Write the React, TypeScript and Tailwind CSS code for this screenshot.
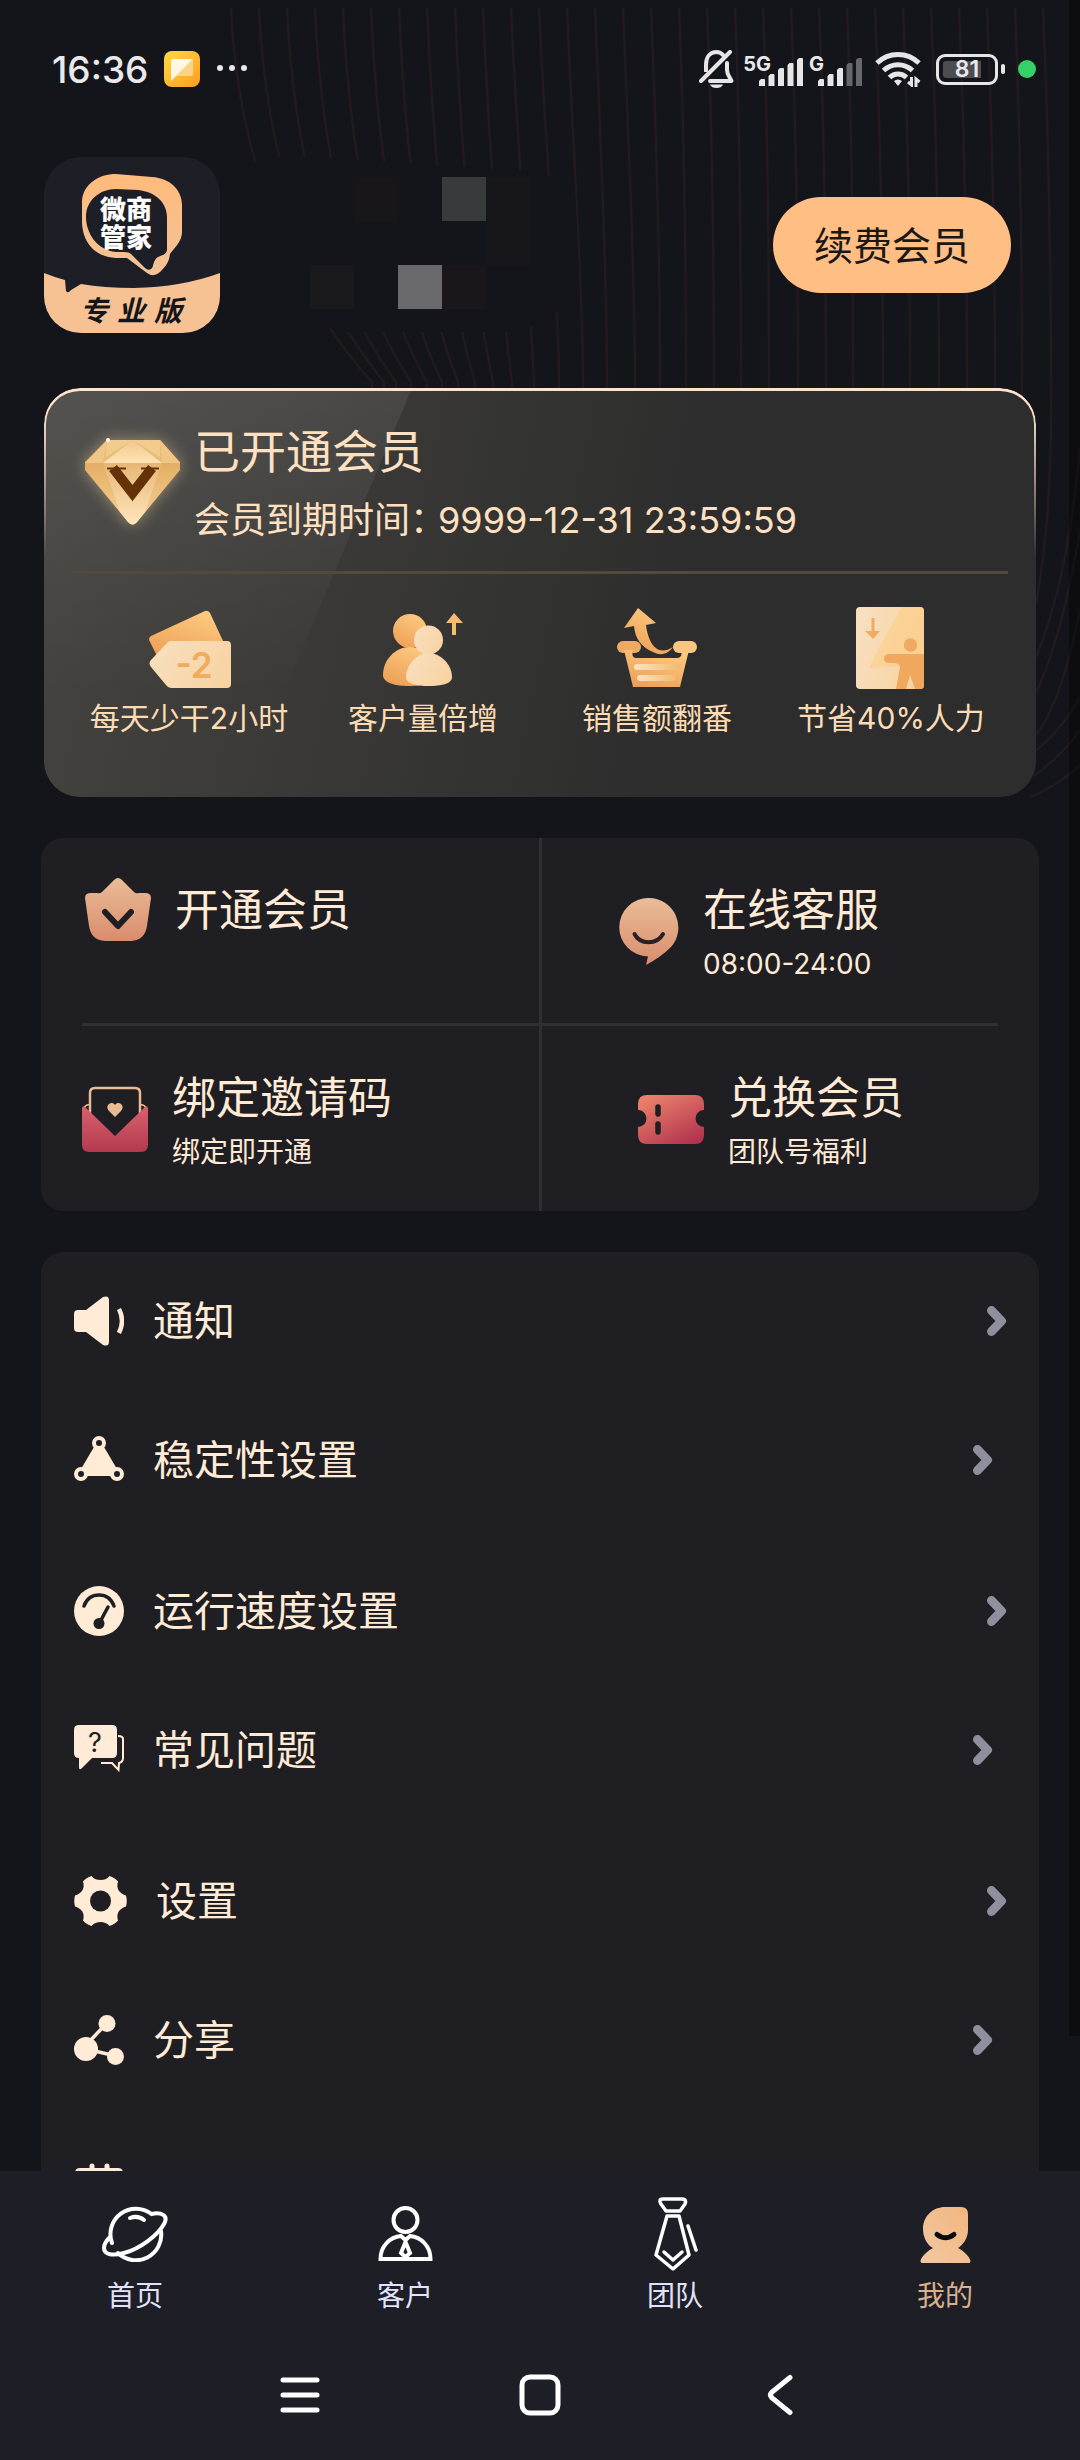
import type { ReactNode } from "react";

const CREAM = "#ffebd6";

/* x positions of the decorative lines where they reach the membership card */
const LINE_ENDS = [
  372, 384, 396, 411, 427, 442, 458, 475, 493, 512, 534, 559, 583, 607, 635, 660, 686, 714, 741,
  769, 798, 826, 853, 883, 910, 939, 967, 995, 1022, 1051,
];

function BackgroundLines() {
  return (
    <svg
      className="pointer-events-none absolute top-0 right-0"
      width="1080"
      height="800"
      viewBox="0 0 1080 800"
      fill="none"
      aria-hidden="true"
    >
      <g stroke="#211b20" strokeWidth="2.5">
        {LINE_ENDS.map((end, i) => {
          const top = 231 + i * 28;
          const pull = Math.max(0, 84 - i * 8);
          return (
            <path key={end} d={`M${top} 8C${top + 6} 150 ${end - pull} 290 ${end} 382V400`} />
          );
        })}
        <path d="M1051 380C1052 460 1048 540 1036 603" />
        <path d="M1080 447C1074 520 1060 600 1036 657" />
        <path d="M1080 530C1070 590 1056 650 1036 693" />
        <path d="M1080 610C1070 660 1056 710 1036 735" />
        <path d="M1080 697C1066 722 1052 738 1034 752" />
        <path d="M1080 730C1066 750 1050 764 1034 776" />
        <path d="M1080 765C1064 780 1048 790 1030 797" />
      </g>
      <path
        d="M225 182L262 158L300 156L540 172L575 190L580 300L520 332L340 332L225 290Z"
        fill="#14151a"
      />
    </svg>
  );
}

function SignalBars({ active }: { active: number }) {
  const heights = [7, 12, 18, 23, 28];
  return (
    <svg width="44" height="29" viewBox="0 0 44 29" aria-hidden="true">
      {heights.map((h, i) => (
        <path
          key={h}
          d={`M${i * 9.5} 29V${31 - h}l2 -2h3q1 0 1 1V29Z`}
          fill={i < active ? "#e6e6e8" : "#66666c"}
        />
      ))}
    </svg>
  );
}

function StatusBar() {
  return (
    <div className="flex h-[138px] shrink-0 items-center justify-between pr-11 pl-[52px] text-[#e9e9eb]">
      <div className="flex items-center">
        <span className="text-[37px] leading-none font-medium">16:36</span>
        <svg className="ml-[16px]" width="36" height="36" viewBox="0 0 36 36" aria-hidden="true">
          <defs>
            <linearGradient id="app" x1="0" y1="0" x2="1" y2="1">
              <stop offset="0" stopColor="#ffdc3c" />
              <stop offset="1" stopColor="#ff9a28" />
            </linearGradient>
          </defs>
          <rect width="36" height="36" rx="8" fill="url(#app)" />
          <path d="M12 25L29 8V23Q29 25 27 25Z" fill="#ffd28a" />
          <path d="M7 30V10Q7 8 9 8H29Z" fill="#fff7e6" />
        </svg>
        <svg className="ml-4" width="32" height="8" viewBox="0 0 32 8" fill="#e9e9eb" aria-hidden="true">
          <circle cx="4" cy="3" r="3" />
          <circle cx="16" cy="3" r="3" />
          <circle cx="28" cy="3" r="3" />
        </svg>
      </div>
      <div className="flex items-center">
        <svg width="36" height="38" viewBox="0 0 36 38" fill="none" stroke="#e6e6e8" strokeWidth="4" aria-hidden="true">
          <path d="M2 31L31 2" strokeLinecap="round" />
          <path d="M7 22V15C7 7 11 2 17.5 2C21 2 23 3.500 25 6" />
          <path d="M28 13V20C28 25 31 27 32.500 31H11" strokeLinecap="round" strokeLinejoin="round" />
          <path d="M11 34.500H24C23 37 20.500 38 17.500 38C14.500 38 12 37 11 34.500Z" fill="#e6e6e8" stroke="none" />
        </svg>
        <div className="ml-2 flex items-start">
          <span className="text-[20px] leading-[22px] font-bold">5G</span>
          <span className="-ml-3 pt-[4px]"><SignalBars active={5} /></span>
        </div>
        <div className="ml-[6px] flex items-start">
          <span className="text-[20px] leading-[22px] font-bold">G</span>
          <span className="-ml-[6px] pt-[4px]"><SignalBars active={3} /></span>
        </div>
        <svg className="ml-[13px]" width="46" height="36" viewBox="0 0 46 36" fill="none" stroke="#e6e6e8" strokeWidth="5" aria-hidden="true">
          <path d="M2 12A30 30 0 0 1 44 12" />
          <path d="M8.500 19.500A21 21 0 0 1 37.500 19.500" />
          <path d="M14.500 26.500A12 12 0 0 1 31.500 26.500" />
          <path d="M19 30A6 6 0 0 1 27 30L23 35Z" fill="#e6e6e8" stroke="none" />
          <path d="M36.500 26V34L33 31M41 36V28L44.500 31" strokeWidth="3" />
        </svg>
        <div className="ml-[15px] flex items-center">
          <div className="flex h-[31px] w-[62px] items-center rounded-[9px] border-[3px] border-[#e6e6e8] p-1">
            <div className="relative h-full w-full">
              <div className="h-full w-4/5 rounded-l-[3px] bg-[#4c4c51]" />
              <span className="absolute inset-0 flex items-center justify-center text-[23px] leading-none font-semibold">
                81
              </span>
            </div>
          </div>
          <div className="ml-[3px] h-[10px] w-[4px] rounded-full bg-[#e6e6e8]" />
        </div>
        <div className="ml-[13px] h-[18px] w-[18px] rounded-full bg-[#35d167]" />
      </div>
    </div>
  );
}

function Logo() {
  return (
    <svg width="176" height="176" viewBox="0 0 176 176" role="img" aria-label="微商管家专业版">
      <defs>
        <clipPath id="logoClip">
          <rect width="176" height="176" rx="37" />
        </clipPath>
        <linearGradient id="bubble" x1="0" y1="0" x2="0" y2="1">
          <stop offset="0" stopColor="#ffba7c" />
          <stop offset="1" stopColor="#f3c399" />
        </linearGradient>
      </defs>
      <g clipPath="url(#logoClip)">
        <rect width="176" height="176" fill="#1e1e27" />
        <path d="M0 116Q10 120 21 123L22 134Q24 137 27 133L37 127Q60 131 90 131Q138 130 176 116V176H0Z" fill="#f6c193" />
      </g>
      <path
        d="M72 17L108 20C126 21 138 33 138 48V75C138 85 130 91 126 97C125 106 121 110 116 115Q110 121 103 116L83 101H72C50 100 38 84 38 64V44C39 27 55 17 72 17Z"
        fill="url(#bubble)"
      />
      <path
        d="M72 32L94 33C112 35 123 46 123 60V93C122 98 118 98 114 100C108 104 110 111 107 112Q104 114 101 111L87 97Q85 95 80 95H72C52 93 42 75 42 60C42 43 56 32 72 32Z"
        fill="#1e1e27"
      />
      <g fontWeight="800" fontSize="26" fill="#ffffff">
        <text x="56" y="62">微商</text>
        <text x="56" y="90">管家</text>
      </g>
      <g fontWeight="600" fontSize="28" fontStyle="italic" fill="#14151a" textAnchor="middle">
        <text x="50" y="164">专</text>
        <text x="87" y="164">业</text>
        <text x="124" y="164">版</text>
      </g>
    </svg>
  );
}

const MOSAIC = [
  "", "bg-[#18161b]", "", "bg-[#393a3c]", "bg-[#17161a]",
  "", "", "", "", "bg-[#17161a]",
  "bg-[#19191b]", "", "bg-[#69696d]", "bg-[#1a171c]", "",
];

function Profile() {
  return (
    <div className="mt-[19px] flex shrink-0 items-center justify-between pr-[69px] pl-11">
      <Logo />
      <div className="mr-auto mb-1 ml-[90px] grid grid-cols-[repeat(5,44px)] auto-rows-[44px]" aria-hidden="true">
        {MOSAIC.map((tone, i) => (
          <div key={i} className={tone} />
        ))}
      </div>
      <button
        type="button"
        className="h-24 rounded-full bg-[#ffbe83] px-[41px] text-[39px] leading-none text-[#1b1714]"
      >
        续费会员
      </button>
    </div>
  );
}

function Diamond() {
  return (
    <svg
      className="shrink-0 overflow-visible drop-shadow-[0_0_8px_rgba(255,225,170,0.45)]"
      width="95"
      height="86"
      viewBox="0 0 95 86"
      aria-hidden="true"
    >
      <defs>
        <linearGradient id="dSide" x1="0" y1="0" x2="0" y2="1">
          <stop offset="0" stopColor="#dca050" />
          <stop offset="1" stopColor="#f6d397" />
        </linearGradient>
        <linearGradient id="dMid" x1="0" y1="0" x2="0" y2="1">
          <stop offset="0" stopColor="#e7b676" />
          <stop offset="1" stopColor="#ffe6bd" />
        </linearGradient>
        <linearGradient id="dTop" x1="0" y1="0" x2="0" y2="1">
          <stop offset="0" stopColor="#f0c98c" />
          <stop offset="1" stopColor="#ffe2b4" />
        </linearGradient>
      </defs>
      <path d="M22 1H75L95 23V31L52 83Q47.500 88 43 83L0 31V23Z" fill="url(#dSide)" />
      <path d="M18 24H77L60 73L52 83Q47.500 88 43 83L35 73Z" fill="url(#dMid)" />
      <path d="M22 1H75L95 24H0Z" fill="#e9bb78" />
      <path d="M22 1L18 24H0ZM75 1L77 24H95Z" fill="#f0c585" />
      <path d="M47.500 1L77 24H18Z" fill="url(#dTop)" />
      <path d="M22 1H47.500L21 18ZM75 1H47.500L75 18Z" fill="#f2cc8f" />
      <path d="M28 29L47.500 54L67 29" fill="none" stroke="#643108" strokeWidth="10" />
      <path d="M22 29.500H41M56 29.500H74" stroke="#643108" strokeWidth="2" />
      <circle cx="23" cy="1" r="2" fill="#fffaf0" />
    </svg>
  );
}

function Gradients() {
  return (
    <svg width="0" height="0" className="absolute" aria-hidden="true">
      <defs>
        <linearGradient id="gold" x1="0.7" y1="0" x2="0.2" y2="1">
          <stop offset="0" stopColor="#fdc980" />
          <stop offset="1" stopColor="#ec9f55" />
        </linearGradient>
        <linearGradient id="pale" x1="0" y1="0.3" x2="1" y2="0.7">
          <stop offset="0" stopColor="#f8dfbe" />
          <stop offset="1" stopColor="#f8d3a2" />
        </linearGradient>
        <linearGradient id="fade" x1="0" y1="0" x2="1" y2="0">
          <stop offset="0" stopColor="#fbe3c2" />
          <stop offset="1" stopColor="#f4b96f" />
        </linearGradient>
        <linearGradient id="peach" x1="0" y1="0" x2="0" y2="1">
          <stop offset="0" stopColor="#e9bd97" />
          <stop offset="1" stopColor="#da8c6d" />
        </linearGradient>
        <linearGradient id="rose" x1="0" y1="0" x2="0" y2="1">
          <stop offset="0" stopColor="#d9626c" />
          <stop offset="1" stopColor="#b4394f" />
        </linearGradient>
        <linearGradient id="coral" x1="0.1" y1="0" x2="0.8" y2="1">
          <stop offset="0" stopColor="#ee856c" />
          <stop offset="1" stopColor="#b2344f" />
        </linearGradient>
        <linearGradient id="skin" x1="1" y1="0" x2="0" y2="1">
          <stop offset="0" stopColor="#f2b67d" />
          <stop offset="1" stopColor="#f1c8a3" />
        </linearGradient>
      </defs>
    </svg>
  );
}

function Art({ w = 84, h = 84, children }: { w?: number; h?: number; children: ReactNode }) {
  return (
    <svg className="shrink-0" width={w} height={h} viewBox={`0 0 ${w} ${h}`} fill="none" aria-hidden="true">
      {children}
    </svg>
  );
}

const benefits: { label: string; icon: ReactNode }[] = [
  {
    label: "每天少干2小时",
    icon: (
      <Art>
        <path d="M4 30L58 5Q61 4 63 7L77 37L12 54L2 34Q2 31 4 30Z" fill="url(#gold)" />
        <path d="M24 35H80Q84 35 84 39V78Q84 82 80 82H24Q21 82 19 79L4 61Q1 57 4 54L19 38Q21 35 24 35Z" fill="url(#pale)" />
        <text x="47" y="72" textAnchor="middle" fontSize="35" fontWeight="600" fill="#edac5e">-2</text>
      </Art>
    ),
  },
  {
    label: "客户量倍增",
    icon: (
      <Art>
        <circle cx="29" cy="25" r="17" fill="url(#gold)" />
        <path d="M29 41C44 41 56 54 56 69C56 77 42 80 28 80C14 80 2 77 2 69C2 54 14 41 29 41Z" fill="url(#gold)" />
        <circle cx="47.500" cy="34" r="14.500" fill="url(#pale)" />
        <path d="M47.500 47C60 47 71 59 71 71C71 78 60 80 47.500 80C36 80 25 78 25 71C25 59 36 47 47.500 47Z" fill="url(#pale)" />
        <path d="M73 7L82 17H75V29H71V17H65Z" fill="#f6bd72" />
      </Art>
    ),
  },
  {
    label: "销售额翻番",
    icon: (
      <Art>
        <path d="M23 2L41 17L31 19C33 35 41 52 58 41C52 50 43 49 38 46C26 41 20 32 19 20L9 22Z" fill="url(#gold)" />
        <rect x="2" y="35" width="24" height="12" rx="6" fill="#eeaa62" />
        <rect x="58" y="35" width="24" height="12" rx="6" fill="#fac680" />
        <path d="M9 44H18Q16 52 21 52H62Q68 52 66 44H74L65 81H18Z" fill="url(#gold)" />
        <rect x="19" y="58" width="46" height="6" rx="3" fill="url(#fade)" />
        <rect x="22" y="69" width="39" height="6" rx="3" fill="url(#fade)" />
      </Art>
    ),
  },
  {
    label: "节省40%人力",
    icon: (
      <Art>
        <rect x="7" y="1" width="68" height="82" rx="4" fill="url(#pale)" />
        <path d="M52 1H71Q75 1 75 5V60L20 62Z" fill="#fdcd86" opacity="0.6" />
        <path d="M22.500 12h3V25H31L24 33L16 25H22.500Z" fill="#f0ac64" />
        <circle cx="61.500" cy="39" r="6.700" fill="#efaa60" />
        <path d="M39.500 48H75V80Q75 83 71 83H66L61 69L57 83H47L51 61Q50 57 45 57H39.500A4.500 4.500 0 0 1 39.500 48Z" fill="#f0a75e" />
      </Art>
    ),
  },
];

function MemberCard() {
  return (
    <section className="relative mx-11 mt-[55px] shrink-0 overflow-hidden rounded-[36px] bg-[linear-gradient(102deg,#454440_0%,#2d2d2d_64%)] pt-[33px] pb-[59px]">
      <div className="absolute inset-0 bg-linear-to-b from-white/8 to-transparent to-75% [clip-path:polygon(0_0,368px_0,196px_100%,0_100%)]" />
      <div className="pointer-events-none absolute inset-0 rounded-[36px] border-x-2 border-t-[3px] border-[#ffe3cf] [mask-image:linear-gradient(black_20px,transparent_170px)]" />
      <div className="relative flex items-center gap-[14px] pl-[41px] text-[#ffe1c2]">
        <Diamond />
        <div>
          <h1 className="text-[46px] leading-[60px]">已开通会员</h1>
          <p className="mt-[17px] text-[36px] leading-[44px]">
            会员到期时间：<span className="-ml-2">9999-12-31 23:59:59</span>
          </p>
        </div>
      </div>
      <div className="relative mx-7 mt-[29px] h-[3px] bg-[#54493d]" />
      <ul className="relative mx-7 mt-8 grid grid-cols-4">
        {benefits.map((b) => (
          <li key={b.label} className="flex flex-col items-center gap-2">
            {b.icon}
            <span className="text-[30px] leading-[40px] whitespace-nowrap text-[#fcdcb4]">{b.label}</span>
          </li>
        ))}
      </ul>
    </section>
  );
}

function Tile({ className, icon, title, note }: { className: string; icon: ReactNode; title: string; note?: string }) {
  return (
    <button
      type="button"
      className={`flex h-[185px] items-start text-left ${note ? "pt-[46px]" : "pt-10"} ${className}`}
    >
      <span className="flex items-center gap-6">
        {icon}
        <span className="flex flex-col gap-[13px]">
          <span className="text-[44px] leading-[52px]">{title}</span>
          {note && <span className="text-[28px] leading-[30px]">{note}</span>}
        </span>
      </span>
    </button>
  );
}

function Tiles() {
  return (
    <section className="mx-[41px] mt-[41px] grid shrink-0 grid-cols-[calc(50%+2px)_1fr] overflow-hidden rounded-[22px] bg-[#1f1e23] text-[#ffebd6]">
      <Tile
        className="border-r-[3px] border-[#303034] pl-11"
        title="开通会员"
        icon={
          <Art w={66} h={64}>
            <path
              d="M29 2Q33 -2 37 2L49 14Q51 16 54 15L60 15Q66 15 66 20L62 48Q60 62 46 63H20Q6 62 4 48L0 20Q0 15 6 15L12 15Q15 16 17 14Z"
              fill="url(#peach)"
            />
            <path d="M20 34L33 48L46 34" stroke="#1f1e23" strokeWidth="6" strokeLinecap="round" strokeLinejoin="round" />
          </Art>
        }
      />
      <Tile
        className="pl-[77px]"
        title="在线客服"
        note="08:00-24:00"
        icon={
          <Art w={60} h={67}>
            <path d="M30 0A29.500 29.500 0 0 1 52 49Q42 59 27 67L29 58.500A29 29 0 0 1 30 0Z" fill="url(#peach)" />
            <path d="M15.500 36C21 47 38 47 44 36" stroke="#2b2124" strokeWidth="4" strokeLinecap="round" />
          </Art>
        }
      />
      <div className="col-span-2 mx-[41px] h-[3px] bg-[#303034]" />
      <Tile
        className="border-r-[3px] border-[#303034] pl-[41px]"
        title="绑定邀请码"
        note="绑定即开通"
        icon={
          <Art w={66} h={67}>
            <path d="M8 30V7Q8 2 13 2H53Q58 2 58 7V30" stroke="#e8bb93" strokeWidth="2.500" />
            <path d="M2 22Q4 18 8 19M64 22Q62 18 58 19" stroke="#e8bb93" strokeWidth="1.500" />
            <path d="M33 31L27 25C22 19 30 14 33 19C36 14 44 19 39 25Z" fill="#e8bb93" />
            <path d="M0 22Q1 19 3 21L33 50L63 21Q65 19 66 22V59Q66 66 59 66H7Q0 66 0 59Z" fill="url(#rose)" />
          </Art>
        }
      />
      <Tile
        className="pl-24"
        title="兑换会员"
        note="团队号福利"
        icon={
          <Art w={66} h={49}>
            <path
              d="M9 0H57Q66 0 66 9V15A8.500 8.500 0 0 0 66 32V40Q66 49 57 49H9Q0 49 0 40V32A8.500 8.500 0 0 0 0 15V9Q0 0 9 0Z"
              fill="url(#coral)"
            />
            <path d="M20 12V19M20 29V37" stroke="#1f1e23" strokeWidth="5.500" strokeLinecap="round" />
          </Art>
        }
      />
    </section>
  );
}

const menu: { label: string; hideLabel?: boolean; icon: ReactNode }[] = [
  {
    label: "通知",
    icon: (
      <Art w={50} h={50}>
        <path d="M4 14H12L29 1Q35 -1 35 4V46Q35 51 29 49L12 36H4Q0 36 0 32V18Q0 14 4 14Z" fill={CREAM} />
        <path d="M45 13Q51 25 45 37" stroke={CREAM} strokeWidth="4.500" />
      </Art>
    ),
  },
  {
    label: "稳定性设置",
    icon: (
      <Art w={50} h={50}>
        <path d="M20 12H30L43 34L37 41H13L7 34Z" fill={CREAM} />
        <g fill="#1f1e23" stroke={CREAM} strokeWidth="4">
          <circle cx="25" cy="8" r="5" />
          <circle cx="7" cy="39" r="5" />
          <circle cx="43" cy="39" r="5" />
        </g>
      </Art>
    ),
  },
  {
    label: "运行速度设置",
    icon: (
      <Art w={50} h={50}>
        <circle cx="25" cy="25" r="25" fill={CREAM} />
        <g stroke="#1f1e23" strokeWidth="3.500" strokeLinecap="round">
          <path d="M10 20Q14 9 25 9Q36 9 40 20" />
          <path d="M34 21L26 36" />
        </g>
        <circle cx="25" cy="37.500" r="5.500" fill="#1f1e23" />
      </Art>
    ),
  },
  {
    label: "常见问题",
    icon: (
      <Art w={50} h={50}>
        <path d="M5 0H38Q43 0 43 5V28Q43 33 38 33H18L8 43Q5 46 5 42V33Q0 33 0 28V5Q0 0 5 0Z" fill={CREAM} />
        <path d="M44 11Q49 11 49 14V33Q49 37 45 38L44.500 45L38 38H27" stroke={CREAM} strokeWidth="2" />
        <text x="21" y="27" textAnchor="middle" fontSize="27" fill="#1f1e23">?</text>
      </Art>
    ),
  },
  {
    label: "设置",
    icon: (
      <Art w={53} h={50}>
        <path
          d="M17.500 0C20 3 23 4 26.500 4C30 4 33 3 35.500 0C39 1 42 3 44 5.500C43 9 43 12 45 15C47 17.500 49 18.500 52 19.500C53 23 53 27 52 30.500C49 31.500 47 32.500 45 35C43 38 43 41 44 44.500C42 47 39 49 35.500 50C33 47 30 46 26.500 46C23 46 20 47 17.500 50C14 49 11 47 9 44.500C10 41 10 38 8 35C6 32.500 4 31.500 1 30.500C0 27 0 23 1 19.500C4 18.500 6 17.500 8 15C10 12 10 9 9 5.500C11 3 14 1 17.500 0Z"
          fill={CREAM}
        />
        <circle cx="26.500" cy="25" r="10.500" fill="#1f1e23" />
      </Art>
    ),
  },
  {
    label: "分享",
    icon: (
      <Art w={50} h={50}>
        <path d="M33 8L12 30M12 34L42 41" stroke={CREAM} strokeWidth="3.500" />
        <g fill={CREAM}>
          <circle cx="12" cy="34" r="12" />
          <circle cx="33" cy="8.500" r="8.500" />
          <circle cx="41.500" cy="41.500" r="8.500" />
        </g>
      </Art>
    ),
  },
  {
    label: "日历",
    hideLabel: true,
    icon: (
      <Art w={50} h={56}>
        <path d="M6 5H44Q49 5 49 10V50Q49 55 44 55H6Q1 55 1 50V10Q1 5 6 5Z" fill={CREAM} />
        <path d="M18 3V12M33 3V12" stroke={CREAM} strokeWidth="5" strokeLinecap="round" />
      </Art>
    ),
  },
];

function MenuList() {
  return (
    <ul className="mx-[41px] mt-[41px] shrink-0 rounded-t-[22px] bg-[#1f1e23] text-[#ffebd6]">
      {menu.map((item, i) => (
        <li key={item.label} className={i % 2 ? "mb-3" : ""}>
          <button
            type="button"
            aria-label={item.label}
            className={`flex w-full items-center gap-[29px] pl-[33px] ${i % 2 ? "h-[140px] pr-[46px]" : "h-[138px] pr-8"}`}
          >
            {item.icon}
            {!item.hideLabel && <span className="text-[41px] leading-[52px]">{item.label}</span>}
            <svg className="ml-auto" width="20" height="30" viewBox="0 0 20 30" fill="none" aria-hidden="true">
              <path d="M4.500 4.500L14.500 15L4.500 25.500" stroke="#8f8f9e" strokeWidth="9" strokeLinecap="round" strokeLinejoin="round" />
            </svg>
          </button>
        </li>
      ))}
    </ul>
  );
}

const tabs: { label: string; active?: boolean; icon: ReactNode }[] = [
  {
    label: "首页",
    icon: (
      <Art w={66} h={56}>
        <g stroke="#ffffff" strokeWidth="4" strokeLinecap="round">
          <path d="M10 37A25.500 25.500 0 0 1 49.500 8C59 6 67 9 62 18C56 29 38 43 22 47C11 50 2 49 2 42C2 38 5 34 8 31" />
          <path d="M16 47A25.500 25.500 0 0 0 59 25" />
          <path d="M28 12Q36 9 42 14" />
        </g>
      </Art>
    ),
  },
  {
    label: "客户",
    icon: (
      <Art w={55} h={56}>
        <g stroke="#ffffff" strokeWidth="4">
          <circle cx="27.500" cy="14" r="12" />
          <path d="M2.500 53C2.500 40 12 31 23 30L27.500 34L32 30C43 31 52.500 40 52.500 53Z" />
          <path d="M27.500 36L23 47L27.500 51L32 47Z" />
        </g>
      </Art>
    ),
  },
  {
    label: "团队",
    icon: (
      <Art w={46} h={76}>
        <g stroke="#ffffff" strokeWidth="3.500" strokeLinecap="round" strokeLinejoin="round">
          <path d="M11 3H30Q35 3 33 8L28 15H14L9 8Q6 3 11 3Z" />
          <path d="M15 20H27L37 59L21 73L4 59Z" />
          <path d="M12 56L21 64L30 56" />
          <path d="M36 30L44 54" />
        </g>
      </Art>
    ),
  },
  {
    label: "我的",
    active: true,
    icon: (
      <Art w={51} h={57}>
        <path
          d="M25 1H41Q48 1 48 8V24C48 32 43 39 38 42C44 45 50 51 50.500 55Q50.500 57 49 57H2Q0.500 57 0.500 55C1 51 7 45 13 42C7 39 3 31 3 23C3 10 13 1 25 1Z"
          fill="url(#skin)"
        />
        <path d="M17 28.500Q25.500 35 34 28.500" stroke="#0c0c0f" strokeWidth="5" strokeLinecap="round" />
      </Art>
    ),
  },
];

function BottomNav() {
  return (
    <footer className="relative shrink-0 bg-[#1e1e27] pt-[25px] pb-[25px]">
      <nav className="grid grid-cols-4">
        {tabs.map((tab) => (
          <a
            key={tab.label}
            href={`#${tab.label}`}
            aria-current={tab.active ? "page" : undefined}
            className={`flex flex-col items-center gap-[6px] ${tab.active ? "text-[#d9b08c]" : "text-[#e0e3fb]"}`}
          >
            <span className="flex h-[76px] items-center">{tab.icon}</span>
            <span className="text-[28px] leading-9">{tab.label}</span>
          </a>
        ))}
      </nav>
      <div className="mx-auto mt-[41px] grid h-20 w-2/3 grid-cols-3">
        <button type="button" aria-label="最近任务" className="flex items-center justify-center">
          <Art w={40} h={40}>
            <path d="M3 5H37M3 20H37M3 35H37" stroke="#ffffff" strokeWidth="5" strokeLinecap="round" />
          </Art>
        </button>
        <button type="button" aria-label="主屏幕" className="flex items-center justify-center">
          <Art w={42} h={42}>
            <rect x="3" y="3" width="36" height="36" rx="8" stroke="#ffffff" strokeWidth="5" />
          </Art>
        </button>
        <button type="button" aria-label="返回" className="flex items-center justify-center">
          <Art w={26} h={42}>
            <path d="M23 3.500L5 18Q2 21 5 24L23 38.500" stroke="#ffffff" strokeWidth="5" strokeLinecap="round" />
          </Art>
        </button>
      </div>
    </footer>
  );
}

export default function App() {
  return (
    <div className="relative flex h-screen flex-col overflow-hidden bg-[#14151a] font-['Inter','Noto_Sans_CJK_SC',sans-serif]">
      <Gradients />
      <BackgroundLines />
      <div className="absolute top-0 right-0 h-[2036px] w-[11px] bg-black/35" />
      <main className="relative flex min-h-0 flex-1 flex-col overflow-hidden">
        <StatusBar />
        <Profile />
        <MemberCard />
        <Tiles />
        <MenuList />
      </main>
      <BottomNav />
    </div>
  );
}
